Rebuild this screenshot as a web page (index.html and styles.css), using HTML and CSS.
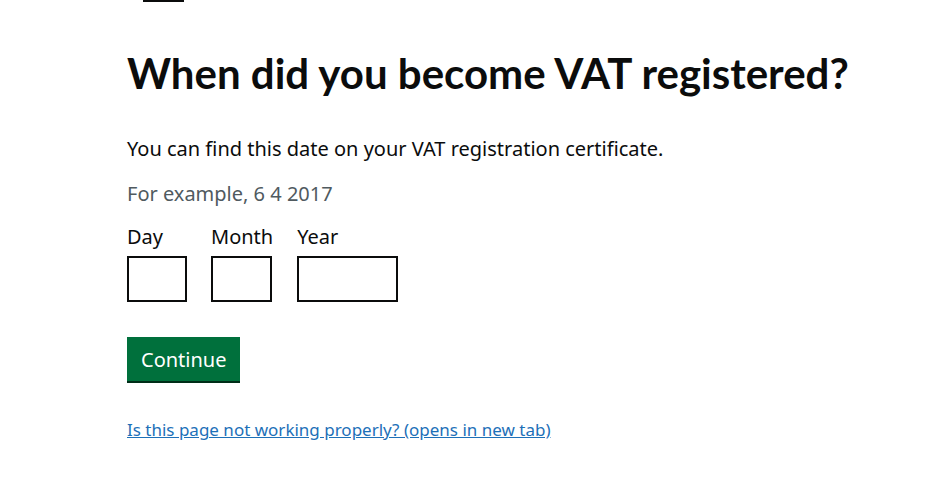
FILE: index.html
```html
<!DOCTYPE html>
<html lang="en">
<head>
    <meta charset="UTF-8">
    <title>When did you become VAT registered?</title>
    <link rel="stylesheet" href="styles.css">
</head>
<body>
    <div class="page">
        <div class="top-bar"></div>
        <h1 class="heading">When did you become VAT registered?</h1>
        <p class="body-text">You can find this date on your VAT registration certificate.</p>
        <div class="hint">For example, 6 4 2017</div>
        <div class="date-input">
            <div class="date-item">
                <label class="date-label" for="day">Day</label>
                <input class="date-box day" id="day" type="text">
            </div>
            <div class="date-item">
                <label class="date-label" for="month">Month</label>
                <input class="date-box month" id="month" type="text">
            </div>
            <div class="date-item">
                <label class="date-label" for="year">Year</label>
                <input class="date-box year" id="year" type="text">
            </div>
        </div>
        <button class="continue-btn">Continue</button>
        <a class="help-link" href="#">Is this page not working properly? (opens in new tab)</a>
    </div>
</body>
</html>
```

FILE: styles.css
```css
body {
    margin: 0;
    background: #fff;
    color: #0b0c0c;
    font-family: 'Noto Sans', Arial, sans-serif;
}

.page {
    padding-left: 127px;
}

.top-bar {
    width: 41px;
    height: 2px;
    margin-left: 16px;
    background: #0b0c0c;
}

.heading {
    margin: 46px 0 0;
    font-family: Lato, 'Noto Sans', sans-serif;
    font-size: 42px;
    font-weight: 700;
    line-height: 50px;
}

.body-text {
    margin: 38px 0 0;
    font-size: 20px;
    line-height: 25px;
}

.hint {
    margin-top: 20px;
    font-size: 20px;
    line-height: 25px;
    color: #505a5f;
}

.date-input {
    display: flex;
    gap: 24px;
    margin-top: 18px;
}

.date-item {
    display: flex;
    flex-direction: column;
}

.date-label {
    font-size: 20px;
    line-height: 25px;
    margin-bottom: 7px;
}

.date-box {
    box-sizing: border-box;
    height: 46px;
    margin: 0;
    border: 2px solid #0b0c0c;
    border-radius: 0;
    background: #fff;
}

.day {
    width: 60px;
}

.month {
    width: 61px;
}

.year {
    width: 101px;
}

.continue-btn {
    display: block;
    margin-top: 35px;
    padding: 0 14px;
    height: 44px;
    border: none;
    border-radius: 0;
    background: #00703c;
    box-shadow: 0 2px 0 #002d18;
    color: #fff;
    font-family: inherit;
    font-size: 20px;
}

.help-link {
    display: inline-block;
    margin-top: 37px;
    color: #1d70b8;
    font-size: 17px;
    line-height: 23px;
    text-decoration: underline;
}
```
